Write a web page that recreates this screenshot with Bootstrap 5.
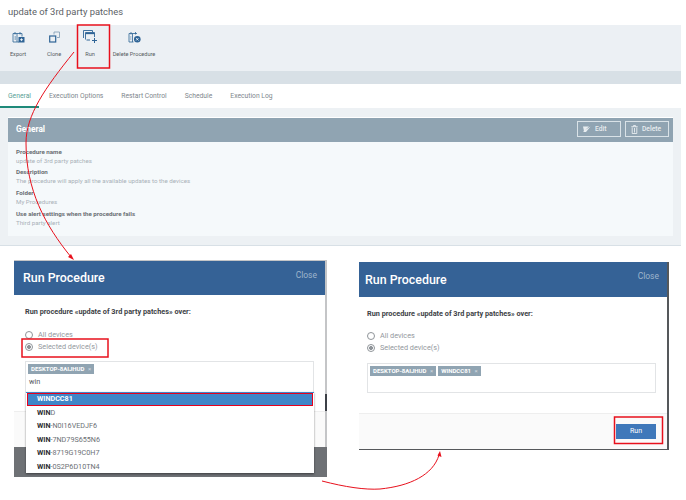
<!DOCTYPE html>
<html lang="en">
<head>
    <meta charset="UTF-8">
    <meta name="viewport" content="width=device-width, initial-scale=1.0">
    <title>Run Procedure</title>
    <link href="https://cdn.jsdelivr.net/npm/bootstrap@5.3.0/dist/css/bootstrap.min.css" rel="stylesheet">
    <style>
        body { margin: 0; background: #fff; font-family: Roboto, "Liberation Sans", sans-serif; }
        .page-wrap { position: relative; width: 686px; height: 500px; overflow: hidden; }
        .notes { position: absolute; left: 0; top: 0; pointer-events: none; }

        .proc-panel { width: 681px; height: 246px; border-bottom: 1px solid #d8e0e6; background: #edf1f4; }
        .proc-title { height: 25px; padding-left: 8px; line-height: 23px; font-size: 9.4px; color: #5c6166; background: #fff; }
        .tool-strip { height: 46px; background: #ecf0f4; }
        .tool-item { display: flex; flex-direction: column; align-items: center; height: 46px; padding-top: 6px; font-size: 5.6px; color: #555b61; }
        .tool-item svg { display: block; height: 13px; margin-bottom: 6px; }
        .tool-item span { line-height: 8px; }
        .tool-export, .tool-clone, .tool-run { width: 36px; }
        .tool-run svg { margin-top: -1px; margin-bottom: 7px; }
        .tool-del { width: 52px; }
        .grey-band { height: 13px; background: #d8e0e6; }
        .tab-row { height: 24px; background: #fff; gap: 18px; padding-left: 8px; font-size: 6.75px; }
        .tab-row .nav-link { padding: 0; height: 24px; line-height: 24px; color: #80878d; }
        .tab-row .nav-link.active { color: #5b9f97; }
        .tab-line { position: absolute; left: 0; top: 106px; width: 39px; height: 2px; background: #1f8a7a; }

        .gen-card { margin: 9px 8px 0 8px; height: 119px; border: 0; border-top: 1px solid #fff; border-radius: 0; background: #f5f9fb; }
        .gen-head { height: 24px; padding: 3px 4px 0 8px; border: 0; border-radius: 0 !important; background: #90a4b2; color: #fff; font-size: 8.4px; font-weight: 700; }
        .gen-head .gen-name { line-height: 17px; }
        .gen-btn { display: flex; align-items: center; justify-content: flex-start; gap: 4px; width: 44px; height: 16px; padding: 0 0 0 5px; border: 1px solid #d9e2e7; border-radius: 0; color: #e8edf0; font-size: 6.7px; font-weight: 500; }
        .gen-body { padding: 5.5px 8px; font-size: 6.2px; line-height: 9px; }
        .gen-body dt { margin: 0; font-weight: 700; color: #6a6f74; }
        .gen-body dd { margin: 0 0 2.7px; color: #a9b1b9; }

        .shot-left { position: relative; flex: none; width: 313px; height: 217px; margin: 14px 0 0 14px; padding-top: 1px; background: linear-gradient(#c4c5c7 0 134px, #3c4047 134px 151px, #c4c5c7 151px 187px, #6e7175 187px); }
        .shot-right { flex: none; width: 310px; height: 188px; margin: 16px 0 0 32px; padding-right: 2px; border-bottom: 1px solid #55585b; background: #55585b; }
        .run-modal { height: 186px; border: 0; border-radius: 0; background: #fff; }
        .shot-left .run-modal { width: 311px; }
        .shot-right .run-modal { height: 187px; }
        .run-head { height: 34px; padding: 0 8px 0 9px; border: 0; border-radius: 0 !important; background: #356296; }
        .shot-right .run-head { height: 35px; padding-left: 6px; }
        .run-head .modal-title { font-size: 12.4px; font-weight: 500; line-height: 34px; color: #fff; }
        .run-close { align-self: flex-start; margin-top: 9px; font-size: 8.5px; line-height: 10px; color: #9fb5cc; }
        .run-body { height: 116px; padding: 12px 11px 0; font-size: 6.9px; }
        .shot-right .run-body { height: 115px; padding-left: 8px; padding-right: 11px; }
        .run-ask { margin: 0 0 13px; line-height: 9px; font-size: 7.3px; font-weight: 700; color: #3d4145; }
        .shot-right .run-ask { margin-bottom: 12px; }
        .radio-line { height: 12px; gap: 5px; font-size: 7.3px; color: #93989d; }
        .radio-dot { flex: none; width: 8px; height: 8px; border: 1px solid #8f9499; border-radius: 50%; background: #fff; }
        .radio-dot.on { background: radial-gradient(circle, #8f9499 0 1.8px, #fff 2.2px); }
        .pick-box { height: 32px; margin-top: 8px; padding: 2px 2px 0; border: 1px solid #e2e4e6; }
        .shot-right .pick-box { height: 30px; margin-top: 9px; }
        .pick-chip { display: inline-block; height: 10px; padding: 0 3px; margin-right: 2px; border-radius: 0; background: #90a4b2; color: #fff; font-size: 6px; font-weight: 700; line-height: 10px; vertical-align: top; }
        .pick-chip i { font-style: normal; font-weight: 400; color: #d4dbe1; margin-left: 2px; }
        .pick-text { margin: 3px 0 0 1px; font-size: 7.3px; line-height: 10px; color: #55595d; }
        .run-foot { height: 36px; padding: 0 11px 0 0; border: 0; border-top: 1px solid #eee; border-radius: 0 !important; background: #fafafa; }
        .run-foot .btn { width: 40px; height: 15px; margin: 0; padding: 0; border: 0; border-radius: 0; background: #3f78ba; color: #fff; font-size: 7px; line-height: 15px; }

        .win-menu { position: absolute; left: 12px; top: 132px; width: 288px; border: 0; border-radius: 0; box-shadow: 0 1px 2px rgba(0,0,0,.45); border-top: 1px solid #3f86c8; }
        .win-menu .list-group-item { height: 13.4px; padding: 0 0 0 11px; border: 0; border-radius: 0; font-size: 7.2px; line-height: 13.4px; color: #6c7075; }
        .win-menu .list-group-item b { color: #2b2e31; }
        .win-menu .list-group-item.active { height: 13px; margin: 0 1px; padding-left: 9px; border: 1.5px solid #e8001c; background: #3f86c8; color: #fff; font-weight: 700; line-height: 10px; }
    </style>
</head>
<body>
<div class="page-wrap">
    <div class="proc-panel">
        <div class="proc-title">update of 3rd party patches</div>
        <div class="tool-strip d-flex">
            <div class="tool-item tool-export">
                <svg width="13" height="13" viewBox="0 0 13 13" fill="none" stroke="#2f6496" stroke-width=".8"><path d="M1 2.500h9v3M1 2.500V11h6M5 2.500V11M3 1v2.500M8 1v2.500M2.500 6H4M2.500 8H4"/><rect x="6.500" y="6" width="6" height="5.500" fill="#2f6496" stroke="none"/><path d="M8 8.700h3M9.500 7.300v2.800" stroke="#fff" stroke-width=".8"/></svg>
                <span>Export</span>
            </div>
            <div class="tool-item tool-clone">
                <svg width="11" height="13" viewBox="0 0 11 13" fill="none"><path d="M5 3.500V1h5.500v5.500H8" stroke="#7f9ab3" stroke-width=".8"/><rect x=".7" y="5" width="6" height="6" stroke="#2f6496" stroke-width="1.200"/></svg>
                <span>Clone</span>
            </div>
            <div class="tool-item tool-run">
                <svg width="14" height="13" viewBox="0 0 14 13" fill="none" stroke="#2f6496" stroke-width=".9"><path d="M.5 8V.5h9V2"/><path d="M2.500 9.500V2.500h9V7"/><path d="M2.500 3.500h9" stroke-width="1.300"/><path d="M3.500 10h3.500M9 10.500h5M11.500 8v5" stroke-width="1"/></svg>
                <span>Run</span>
            </div>
            <div class="tool-item tool-del">
                <svg width="13" height="13" viewBox="0 0 13 13" fill="none" stroke="#2f6496" stroke-width=".8"><path d="M9 2.500H1V11h4.500M4.500 2.500V11M3 1v2.500M7.500 1v2.500M2.300 6h1M2.300 8h1"/><circle cx="9.300" cy="8.300" r="3.300" fill="#2f6496" stroke="none"/><path d="M8.100 7.100l2.400 2.400M10.500 7.100l-2.400 2.400" stroke="#fff" stroke-width=".8"/></svg>
                <span>Delete Procedure</span>
            </div>
        </div>
        <div class="grey-band"></div>
        <nav class="nav tab-row">
            <a class="nav-link active" href="#">General</a>
            <a class="nav-link" href="#">Execution Options</a>
            <a class="nav-link" href="#">Restart Control</a>
            <a class="nav-link" href="#">Schedule</a>
            <a class="nav-link" href="#">Execution Log</a>
        </nav>
        <div class="tab-line"></div>
        <div class="card gen-card">
            <div class="card-header gen-head d-flex justify-content-between">
                <span class="gen-name">General</span>
                <div class="d-flex gen-btns" style="gap:4px">
                    <button type="button" class="btn gen-btn">
                        <svg width="8" height="8" viewBox="0 0 8 8"><path d="M0 1.500h6L1 6zM7.500 1.500L3 7H.5V6z" fill="#e8edf0"/></svg>Edit
                    </button>
                    <button type="button" class="btn gen-btn">
                        <svg width="7" height="9" viewBox="0 0 7 9" fill="none" stroke="#e8edf0" stroke-width=".9"><path d="M.3 1.700h6.400M2.500 1.700V.5h2v1.200M1.200 2.500v6h4.600v-6M3.500 3v4.500"/></svg>Delete
                    </button>
                </div>
            </div>
            <dl class="card-body gen-body m-0">
                <dt>Procedure name</dt>
                <dd>update of 3rd party patches</dd>
                <dt>Description</dt>
                <dd>The procedure will apply all the available updates to the devices</dd>
                <dt>Folder</dt>
                <dd>My Procedures</dd>
                <dt>Use alert settings when the procedure fails</dt>
                <dd>Third party alert</dd>
            </dl>
        </div>
    </div>

    <div class="d-flex align-items-start">
        <div class="shot-left">
            <div class="modal-content run-modal">
                <div class="modal-header run-head">
                    <h5 class="modal-title">Run Procedure</h5>
                    <span class="run-close">Close</span>
                </div>
                <div class="modal-body run-body">
                    <p class="run-ask">Run procedure «update of 3rd party patches» over:</p>
                    <div class="radio-line d-flex align-items-center"><span class="radio-dot"></span>All devices</div>
                    <div class="radio-line d-flex align-items-center"><span class="radio-dot on"></span>Selected device(s)</div>
                    <div class="pick-box">
                        <span class="pick-chip">DESKTOP-8AIJHUD <i>×</i></span>
                        <div class="pick-text">win</div>
                    </div>
                </div>
                <div class="modal-footer run-foot">
                    <button type="button" class="btn">Run</button>
                </div>
            </div>
            <div class="list-group win-menu">
                <div class="list-group-item active">WINDCC81</div>
                <div class="list-group-item"><b>WIN</b>D</div>
                <div class="list-group-item"><b>WIN</b>-N0I16VEDJF6</div>
                <div class="list-group-item"><b>WIN</b>-7ND79S655N6</div>
                <div class="list-group-item"><b>WIN</b>-8719G19C0H7</div>
                <div class="list-group-item"><b>WIN</b>-0S2P6D10TN4</div>
            </div>
        </div>

        <div class="shot-right">
            <div class="modal-content run-modal">
                <div class="modal-header run-head">
                    <h5 class="modal-title">Run Procedure</h5>
                    <span class="run-close">Close</span>
                </div>
                <div class="modal-body run-body">
                    <p class="run-ask">Run procedure «update of 3rd party patches» over:</p>
                    <div class="radio-line d-flex align-items-center"><span class="radio-dot"></span>All devices</div>
                    <div class="radio-line d-flex align-items-center"><span class="radio-dot on"></span>Selected device(s)</div>
                    <div class="pick-box">
                        <span class="pick-chip">DESKTOP-8AIJHUD <i>×</i></span><span class="pick-chip">WINDCC81 <i>×</i></span>
                    </div>
                </div>
                <div class="modal-footer run-foot">
                    <button type="button" class="btn">Run</button>
                </div>
            </div>
        </div>
    </div>

    <svg class="notes" width="686" height="500" viewBox="0 0 686 500" fill="none" stroke="#e8101c">
        <rect x="77.500" y="25" width="32" height="43" stroke-width="1.500"/>
        <rect x="22" y="339" width="86" height="18" stroke-width="1.500"/>
        <rect x="614.500" y="417" width="48" height="26.500" stroke-width="1.500"/>
        <path d="M74 52C45 88 26 115 26 143C26 190 45 225 71 257"/>
        <path d="M74 260l-6-3 3-3z" fill="#e8101c" stroke="none"/>
        <path d="M322 481C345 487 365 490 380 489C410 486 433 475 439 455"/>
        <path d="M440 451l1.500 6-4-1.500z" fill="#e8101c" stroke="none"/>
    </svg>
</div>
<script src="https://cdn.jsdelivr.net/npm/bootstrap@5.3.0/dist/js/bootstrap.bundle.min.js"></script>
</body>
</html>
